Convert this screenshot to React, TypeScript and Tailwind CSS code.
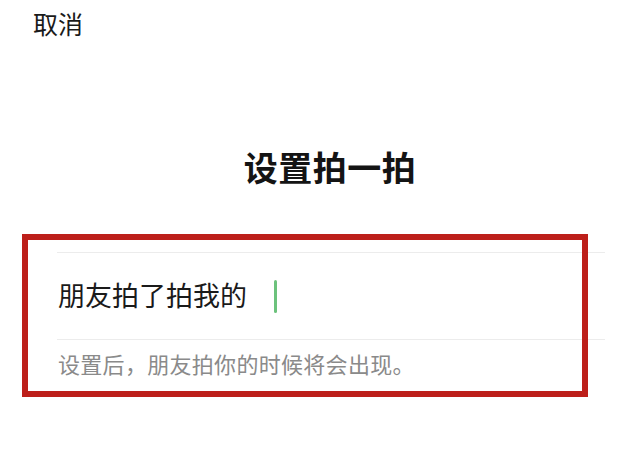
import React from "react";

export default function App() {
  return (
    <div
      className="relative w-[640px] h-[459px] overflow-hidden bg-white"
      style={{ fontFamily: '"Noto Sans CJK SC", "Noto Sans", sans-serif' }}
    >
      <div className="h-[50px] flex items-center pl-[33px] pb-[3px] text-[25px] leading-none text-[#1a1a1a]">
        取消
      </div>
      <div className="mt-[89px] h-[60px] flex items-center justify-center pl-[20px] pb-[4px] text-[34px] font-bold leading-none tracking-[0.5px] text-[#141414]">
        设置拍一拍
      </div>
      <div className="mt-[53px] ml-[57px] w-[548px]">
        <div className="border-t border-[#ececec] h-[87px] flex items-center">
          <span className="text-[27px] leading-none text-[#1a1a1a] pl-px mb-[4px]">朋友拍了拍我的</span>
          <span className="ml-[27px] w-[3px] h-[33px] rounded-sm bg-[#6cc27c]" />
        </div>
        <div className="border-t border-[#ececec] h-[52px] flex items-center pb-[6px]">
          <span className="text-[22px] leading-none tracking-[0.3px] text-[#8a8a8a] pl-px">设置后，朋友拍你的时候将会出现。</span>
        </div>
      </div>
      <div className="absolute left-[22px] top-[234px] w-[566px] h-[163px] border-[6px] border-[#bd1f1a]" />
    </div>
  );
}
